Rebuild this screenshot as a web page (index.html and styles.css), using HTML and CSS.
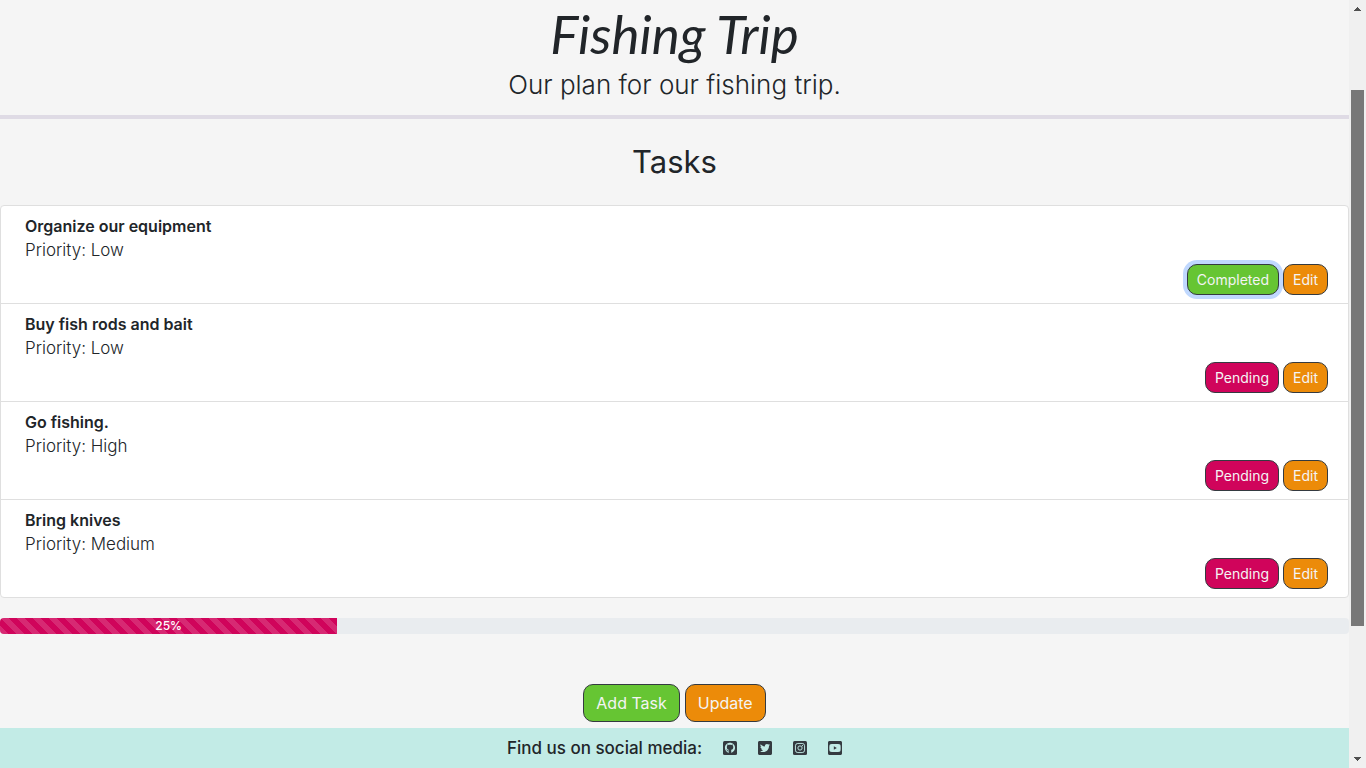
FILE: index.html
```html
<!DOCTYPE html>
<html lang="en">
<head>
<meta charset="utf-8">
<title>Fishing Trip</title>
<link rel="stylesheet" href="styles.css">
</head>
<body>
<div class="page">
  <header class="banner">
    <h1 class="title">Fishing Trip</h1>
    <p class="lead">Our plan for our fishing trip.</p>
  </header>
  <main class="main">
    <h2 class="heading">Tasks</h2>
    <ul class="tasks">
      <li class="task">
        <strong class="name">Organize our equipment</strong>
        <span class="priority">Priority: Low</span>
        <div class="actions"><button class="btn small green focused">Completed</button><button class="btn small orange">Edit</button></div>
      </li>
      <li class="task">
        <strong class="name">Buy fish rods and bait</strong>
        <span class="priority">Priority: Low</span>
        <div class="actions"><button class="btn small pink">Pending</button><button class="btn small orange">Edit</button></div>
      </li>
      <li class="task">
        <strong class="name">Go fishing.</strong>
        <span class="priority">Priority: High</span>
        <div class="actions"><button class="btn small pink">Pending</button><button class="btn small orange">Edit</button></div>
      </li>
      <li class="task">
        <strong class="name">Bring knives</strong>
        <span class="priority">Priority: Medium</span>
        <div class="actions"><button class="btn small pink">Pending</button><button class="btn small orange">Edit</button></div>
      </li>
    </ul>
    <div class="progress" role="progressbar" aria-label="Tasks completed" aria-valuenow="25" aria-valuemin="0" aria-valuemax="100">
      <div class="bar" style="width: 25%">25%</div>
    </div>
    <div class="controls"><button class="btn green">Add Task</button><button class="btn orange">Update</button></div>
  </main>
  <footer class="footer">
    <span class="social-label">Find us on social media:</span>
    <nav class="social" aria-label="Social media">
      <a href="#" aria-label="GitHub"><svg class="icon" viewBox="0 32 448 448"><rect y="32" width="448" height="448" rx="48"/><path class="cut" d="M224 88C134 88 62 157 62 250c0 73 46 134 111 155 9 2 12-4 12-9v-37c-46 10-56-19-56-19-8-19-19-25-19-25-15-11 1-11 1-11 17 1 26 18 26 18 15 26 39 19 49 14 2-11 6-19 11-23-37-4-75-18-75-82 0-18 6-33 17-44-2-5-8-22 1-45 13-4 45 17 45 17 26-7 54-7 80 0 0 0 32-21 45-17 9 23 3 40 1 45 11 12 18 26 18 44 0 64-39 78-76 82 6 5 11 15 11 31v52c0 5 3 11 12 9 65-22 110-82 110-155 0-93-75-162-162-162z"/></svg></a>
      <a href="#" aria-label="Twitter"><svg class="icon" viewBox="0 32 448 448"><path d="M400 32H48C21.5 32 0 53.5 0 80v352c0 26.5 21.5 48 48 48h352c26.5 0 48-21.5 48-48V80c0-26.500-21.500-48-48-48zm-48.900 158.800c.2 2.800.2 5.700.2 8.500 0 86.700-66 186.600-186.600 186.600-37.200 0-71.700-10.800-100.700-29.400 5.300.6 10.400.8 15.800.8 30.700 0 58.900-10.400 81.400-28-28.800-.6-53-19.500-61.300-45.500 10.100 1.500 19.200 1.500 29.600-1.200-30-6.100-52.500-32.500-52.500-64.400v-.8c8.700 4.900 18.900 7.900 29.600 8.300a65.400 65.400 0 0 1-29.200-54.600c0-12.200 3.200-23.400 8.900-33.100 32.300 39.800 80.800 65.800 135.200 68.600-9.300-44.500 24-80.600 64-80.600 18.900 0 35.900 7.900 47.900 20.700 14.800-2.800 29-8.300 41.600-15.800-4.900 15.200-15.200 28-28.800 36.100 13.200-1.400 26-5.100 37.800-10.200-8.900 13.100-20.100 24.700-32.900 34z"/></svg></a>
      <a href="#" aria-label="Instagram"><svg class="icon" viewBox="0 32 448 448"><rect y="32" width="448" height="448" rx="48"/><rect class="line" x="78" y="110" width="292" height="292" rx="76"/><circle class="line" cx="224" cy="256" r="68"/><circle class="cut" cx="303" cy="177" r="19"/></svg></a>
      <a href="#" aria-label="YouTube"><svg class="icon" viewBox="0 32 448 448"><path d="M186.800 202.100l95.200 54.100-95.200 54.100V202.100zM448 80v352c0 26.500-21.500 48-48 48H48c-26.500 0-48-21.500-48-48V80c0-26.500 21.500-48 48-48h352c26.500 0 48 21.500 48 48zm-42 176.300s0-59.600-7.600-88.200c-4.200-15.800-16.500-28.200-32.200-32.400C337.900 128 224 128 224 128s-113.900 0-142.200 7.700c-15.700 4.200-28 16.600-32.200 32.400-7.600 28.500-7.600 88.200-7.600 88.200s0 59.600 7.600 88.200c4.200 15.800 16.500 27.700 32.200 31.900C110.100 384 224 384 224 384s113.900 0 142.200-7.700c15.700-4.200 28-16.100 32.200-31.900 7.600-28.500 7.600-88.100 7.600-88.100z"/></svg></a>
    </nav>
  </footer>
</div>
<div class="scrollbar" aria-hidden="true">
  <svg class="arrow" viewBox="0 0 7 4"><path d="M3 0h1v1h1v1h1v1h1v1H0V3h1V2h1V1h1z"/></svg>
  <div class="track"><div class="before"></div><div class="thumb"></div><div class="after"></div></div>
  <svg class="arrow" viewBox="0 0 7 4"><path d="M0 0h7v1H6v1H5v1H4v1H3V3H2V2H1V1H0z"/></svg>
</div>
</body>
</html>
```
FILE: styles.css
```css
* { box-sizing: border-box; }
body {
  margin: 0;
  min-height: 100vh;
  display: flex;
  background: #f5f5f5;
  color: #212529;
  font: 16px/24px Inter, "Liberation Sans", sans-serif;
}
.page { flex: 1; min-width: 0; display: flex; flex-direction: column; }
.banner { padding-bottom: 13px; border-bottom: 4px solid #dfdbe5; text-align: center; }
.title {
  margin: 0;
  font: italic 400 53px/68px Lato, "Open Sans", sans-serif;
}
.lead { margin: 0; font-size: 26px; font-weight: 300; line-height: 34px; }
.main { flex: 1; }
.heading { margin: 24px 0; text-align: center; font-size: 31px; font-weight: 400; line-height: 38px; }
.tasks {
  margin: 0;
  padding: 0;
  list-style: none;
  background: #fff;
  border: 1px solid #dfdfdf;
  border-radius: 4px;
}
.task { display: flex; flex-direction: column; padding: 8px 20px 8px 24px; }
.task + .task { border-top: 1px solid #dfdfdf; }
.name { font-weight: 600; }
.priority { font-size: 17px; font-weight: 300; }
.actions { display: flex; justify-content: flex-end; gap: 4px; padding-top: 2px; }
.btn {
  padding: 6px 12px;
  border: 1px solid #343a40;
  border-radius: 10px;
  color: #f4f4f4;
  font: inherit;
}
.small { padding: 4px 9px; font-size: 14px; font-weight: 400; line-height: 21px; }
.green { background: #66c533; }
.orange { background: #ec8b09; }
.pink { background: #d0045b; }
.focused { box-shadow: 0 0 0 4px #c0d8fe; }
.progress {
  display: flex;
  height: 16px;
  margin-top: 20px;
  overflow: hidden;
  background: #e9ecef;
  border-radius: 4px;
}
.bar {
  background: #d0045b linear-gradient(45deg, rgba(255,255,255,.15) 25%, transparent 25%, transparent 50%, rgba(255,255,255,.15) 50%, rgba(255,255,255,.15) 75%, transparent 75%) 0 0 / 16px 16px;
  color: #fff;
  text-align: center;
  font-size: 12px;
  font-weight: 500;
  line-height: 16px;
}
.controls { display: flex; justify-content: center; gap: 5px; margin-top: 50px; padding-bottom: 6px; }
.footer {
  display: flex;
  justify-content: center;
  align-items: center;
  gap: 21px;
  padding: 8px;
  background: #c2ebe6;
}
.social-label { font-size: 17px; font-weight: 500; }
.social { display: flex; gap: 21px; }
.social a { display: flex; color: #343a40; }
.icon { width: 14px; height: 14px; fill: currentColor; }
.icon .cut { fill: #c2ebe6; }
.icon .line { fill: none; stroke: #c2ebe6; stroke-width: 30px; }
.scrollbar {
  width: 17px;
  display: flex;
  flex-direction: column;
  align-items: center;
  gap: 7px;
  padding: 7px 2px;
  background: #f0f0f0;
}
.arrow { width: 7px; height: 4px; fill: #505050; }
.track { flex: 1; align-self: stretch; display: flex; flex-direction: column; }
.before { flex: 72; }
.thumb { flex: 536; background: #787878; }
.after { flex: 124; }
```
